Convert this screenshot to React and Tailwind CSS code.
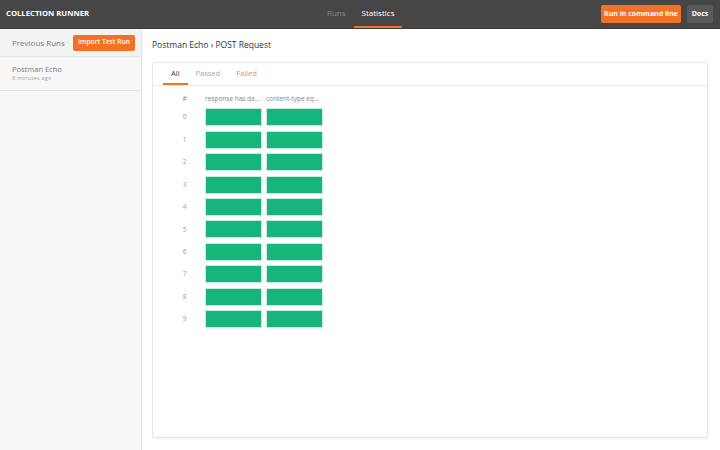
import React, { useState } from "react";

const rows = [0, 1, 2, 3, 4, 5, 6, 7, 8, 9];

const App = () => {
  const [tab, setTab] = useState("All");

  return (
    <div
      className="flex flex-col w-[720px] h-[450px] bg-white text-[#505050] overflow-hidden whitespace-nowrap"
      style={{ fontFamily: '"Open Sans", "Liberation Sans", sans-serif' }}
    >
      {/* top bar */}
      <div className="flex items-center h-[29px] bg-[#464646] border-b border-[#3a3a3a] shrink-0">
        <div className="w-[319px] pl-[6px] text-[7.7px] font-bold text-white">COLLECTION RUNNER</div>
        <div className="flex-1 flex h-full items-stretch">
          <div className="flex items-center px-[8px] text-[8px] text-[#8a8a8a] border-b-2 border-transparent">Runs</div>
          <div className="flex items-center px-[8px] text-[8px] text-white border-b-2 border-[#f47023]">Statistics</div>
        </div>
        <button className="h-[18px] w-[80px] rounded-[2px] bg-[#f47023] text-white text-[7px] font-bold mr-[6px]">
          Run in command line
        </button>
        <button className="h-[18px] w-[26px] rounded-[2px] bg-[#5a5a5a] text-white text-[7px] font-bold mr-[7px]">
          Docs
        </button>
      </div>

      <div className="flex flex-1 min-h-0">
        {/* sidebar */}
        <div className="w-[142px] shrink-0 bg-[#f7f7f7] border-r border-[#e3e3e3]">
          <div className="flex items-center justify-between h-[28px] pl-[12px] pr-[6px] border-b border-[#e3e3e3] bg-[#f3f3f3]">
            <span className="text-[8px] text-[#777]">Previous Runs</span>
            <button className="h-[16px] w-[62px] rounded-[2px] bg-[#f47023] text-white text-[6.7px] font-semibold">
              Import Test Run
            </button>
          </div>
          <div className="h-[34px] px-[12px] pt-[7px] border-b border-[#e3e3e3]">
            <div className="text-[7.5px] text-[#777] leading-[10px]">Postman Echo</div>
            <div className="text-[6px] text-[#aaa] leading-[9px]">8 minutes ago</div>
          </div>
        </div>

        {/* main */}
        <div className="flex-1 flex flex-col pl-[10px] pr-[12px] pb-[12px]">
          <div className="h-[33px] flex items-center text-[8.5px] text-[#333]">
            Postman Echo › POST Request
          </div>
          <div className="flex-1 border border-[#e6e6e6] rounded-[2px] shadow-[0_1px_2px_rgba(0,0,0,0.06)]">
            <div className="flex h-[23px] pl-[10px] border-b border-[#ebebeb]">
              {["All", "Passed", "Failed"].map((t) => (
                <button
                  key={t}
                  onClick={() => setTab(t)}
                  className={`px-[8px] pt-[1px] text-[7.5px] border-b-2 ${
                    tab === t ? "text-[#333] border-[#f47023]" : "text-[#a5a5a5] border-transparent"
                  }`}
                >
                  {t}
                </button>
              ))}
            </div>
            <div className="pl-[11px] pt-[6px]">
              <div className="flex h-[14px] items-center text-[6.5px] text-[#888]">
                <div className="w-[41px] text-center">#</div>
                <div className="w-[61px]">response has da...</div>
                <div className="w-[61px]">content-type eq...</div>
              </div>
              {rows.map((r) => (
                <div key={r} className="flex h-[22.45px] items-center">
                  <div className="w-[41px] text-center text-[6.5px] text-[#999]">{r}</div>
                  <div className="w-[57px] h-[18px] bg-[#17b47b] border border-[#c8eedf] mr-[4px]" />
                  <div className="w-[57px] h-[18px] bg-[#17b47b] border border-[#c8eedf]" />
                </div>
              ))}
            </div>
          </div>
        </div>
      </div>
    </div>
  );
};

export default App;
